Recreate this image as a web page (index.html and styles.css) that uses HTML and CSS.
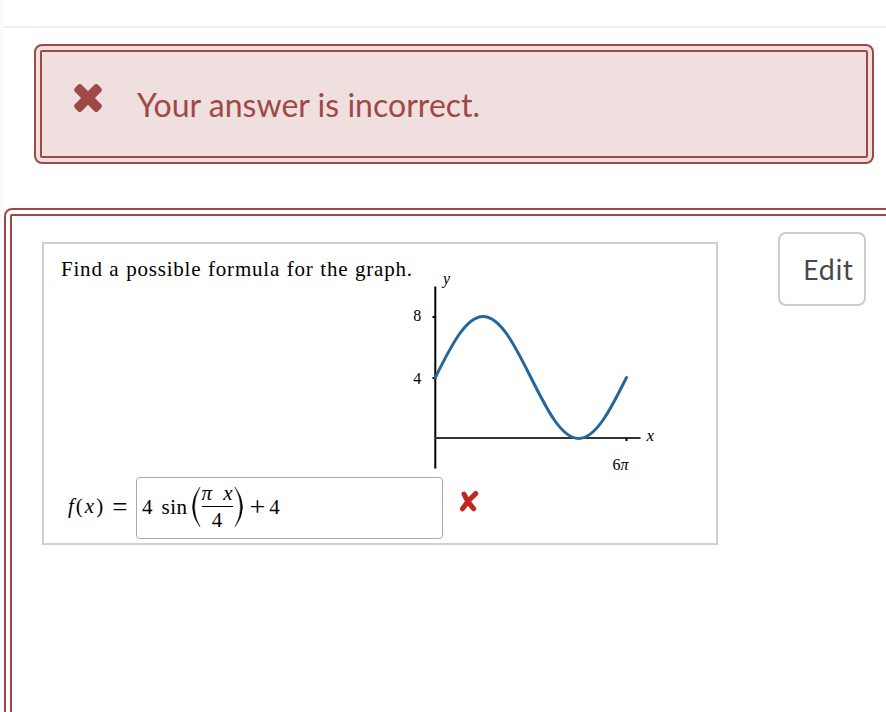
FILE: index.html
```
<!DOCTYPE html>
<html lang="en">
<head>
    <meta charset="UTF-8">
    <meta name="viewport" content="width=device-width, initial-scale=1.0">
    <title>Question</title>
    <link rel="stylesheet" href="styles.css">
</head>
<body>
    <main>
        <div class="topbar"></div>

        <div class="alert">
            <div class="alert-inner">
                <svg class="alert-icon" width="30" height="30" viewBox="0 0 30 30">
                    <g transform="rotate(45 15 15)">
                        <rect x="-1.4" y="10.2" width="32.8" height="9.6" rx="2.6" />
                        <rect x="10.2" y="-1.4" width="9.6" height="32.8" rx="2.6" />
                    </g>
                </svg>
                <span class="alert-text">Your answer is incorrect.</span>
            </div>
        </div>

        <section class="question">
            <div class="question-inner">
                <div class="problem">
                    <div class="prompt">
                        <p class="prompt-text">Find a possible formula for the graph.</p>
                        <svg class="graph" width="260" height="210" viewBox="405 266 260 210">
                            <!-- axes and ticks -->
                            <path class="axis" d="M435.3 286.5V468.5" />
                            <path class="axis axis-x" d="M435 438H640.5" />
                            <path class="axis" d="M432.5 317H435M432.5 378H435M626.5 438V441" />
                            <path class="curve" d="M435.3 377.5C450.9 346.2 465.8 316.5 483.1 316.5S515.3 346.2 530.9 377.5S561.4 438.5 578.7 438.5S610.9 408.8 626.5 377.5" />
                            <text class="italic" x="443" y="284">y</text>
                            <text x="413.3" y="321">8</text>
                            <text x="413.3" y="384">4</text>
                            <text class="italic wide" x="646.5" y="441">x</text>
                            <text x="612.5" y="470">6<tspan class="italic">π</tspan></text>
                        </svg>
                    </div>

                    <div class="answer">
                        <span class="label"><i>f</i><span>(</span><i>x</i><span>)</span><span class="equals">=</span></span>
                        <div class="answer-box">
                            <span class="coef">4</span>
                            <span class="func">sin</span>
                            <svg class="paren" width="10" height="42" viewBox="0 0 10 42">
                                <path d="M9 1Q-6 21 9 41Q-2 21 9 1Z" />
                            </svg>
                            <span class="fraction">
                                <span class="top"><i>π</i><i>x</i></span>
                                <span class="bottom">4</span>
                            </span>
                            <svg class="paren" width="10" height="42" viewBox="0 0 10 42">
                                <path d="M1 1Q16 21 1 41Q12 21 1 1Z" />
                            </svg>
                            <span class="plus">+</span>
                            <span>4</span>
                        </div>
                        <svg class="wrong" width="20" height="22" viewBox="0 0 20 22">
                            <path d="M5 4Q8.5 12.5 14.7 18.7M16.8 3.5Q9 10 3.5 18.8" />
                        </svg>
                    </div>
                </div>
                <button class="edit">Edit</button>
            </div>
        </section>
    </main>
</body>
</html>
```
FILE: styles.css
```
* {
    box-sizing: border-box;
}

body {
    margin: 0;
    background-color: #fafafa;
    font-family: "Liberation Serif", serif;
    overflow: hidden;
}

main {
    margin-left: 4px;
    height: 712px;
    background-color: #fff;
    overflow: hidden;
}

.topbar {
    height: 28px;
    border-bottom: 2px solid #eee;
}

.alert {
    width: 840px;
    height: 120px;
    margin: 16px 0 0 30px;
    padding: 4px;
    border: 2px solid #9f4946;
    border-radius: 8px;
    background-color: #efdfdf;
}

.alert-inner {
    display: flex;
    height: 108px;
    padding-left: 31px;
    border: 2px solid #9f4946;
    border-radius: 2px;
    color: #9f4946;
}

.alert-icon {
    margin-top: 31px;
    fill: currentColor;
}

.alert-text {
    margin: 33px 0 0 34px;
    font: 32px/40px Lato, sans-serif;
    letter-spacing: 0.03px;
    white-space: nowrap;
}

.question {
    width: 920px;
    height: 600px;
    margin-top: 44px;
    padding: 4px;
    border: 2px solid #9f4946;
    border-radius: 8px;
}

.question-inner {
    display: flex;
    align-items: flex-start;
    height: 588px;
    padding: 26px 0 0 30px;
    border: 2px solid #9f4946;
    border-radius: 2px;
}

.problem {
    width: 676px;
    height: 303px;
    border: 2px solid #d0d0d0;
}

.prompt {
    display: flex;
    height: 233px;
    padding-left: 17px;
}

.prompt-text {
    width: 344px;
    margin: 13px 0 0;
    font-size: 21px;
    line-height: 24px;
    letter-spacing: 0.8px;
    word-spacing: 0.6px;
    white-space: nowrap;
}

.graph {
    flex: none;
    margin-top: 22px;
    font-size: 16px;
}

.axis {
    fill: none;
    stroke: #000;
    stroke-width: 2;
}

.axis-x {
    stroke: #333;
    stroke-width: 2.2;
}

.curve {
    fill: none;
    stroke: #25679b;
    stroke-width: 3;
    stroke-linecap: round;
}

.italic {
    font-style: italic;
}

.wide {
    font-size: 17px;
}

.answer {
    display: flex;
    padding-left: 24px;
    font-size: 21px;
}

.label {
    display: flex;
    width: 68px;
    padding-top: 17px;
    line-height: 24px;
    letter-spacing: 2px;
}

.equals {
    margin-left: 7px;
    padding-top: 1px;
    font-size: 27px;
    letter-spacing: 0;
}

.answer-box {
    display: flex;
    align-items: center;
    width: 307px;
    height: 62px;
    padding: 0 0 2px 5px;
    border: 1px solid #aaa;
    border-radius: 4px;
}

.func {
    margin: 0 3px 0 9px;
    letter-spacing: 0.5px;
}

.paren {
    flex: none;
    fill: #000;
    stroke: #000;
    stroke-width: 0.4;
}

.fraction {
    display: flex;
    flex-direction: column;
    width: 31px;
    margin: 0 1px;
    text-align: center;
}

.top {
    display: flex;
    justify-content: space-between;
    height: 26px;
    line-height: 24px;
    border-bottom: 1px solid #000;
}

.bottom {
    height: 27px;
    line-height: 27px;
}

.plus {
    margin: 0 4px 0 6px;
    font-size: 28px;
}

.wrong {
    margin: 13px 0 0 16px;
    fill: none;
    stroke: #c0281f;
    stroke-width: 5;
    stroke-linecap: round;
}

.edit {
    width: 88px;
    height: 74px;
    margin: -10px 0 0 60px;
    padding: 0 0 2px 12px;
    border: 2px solid #ccc;
    border-radius: 8px;
    background-color: #fff;
    color: #484848;
    font: 27px "Noto Sans CJK SC", sans-serif;
}
```
